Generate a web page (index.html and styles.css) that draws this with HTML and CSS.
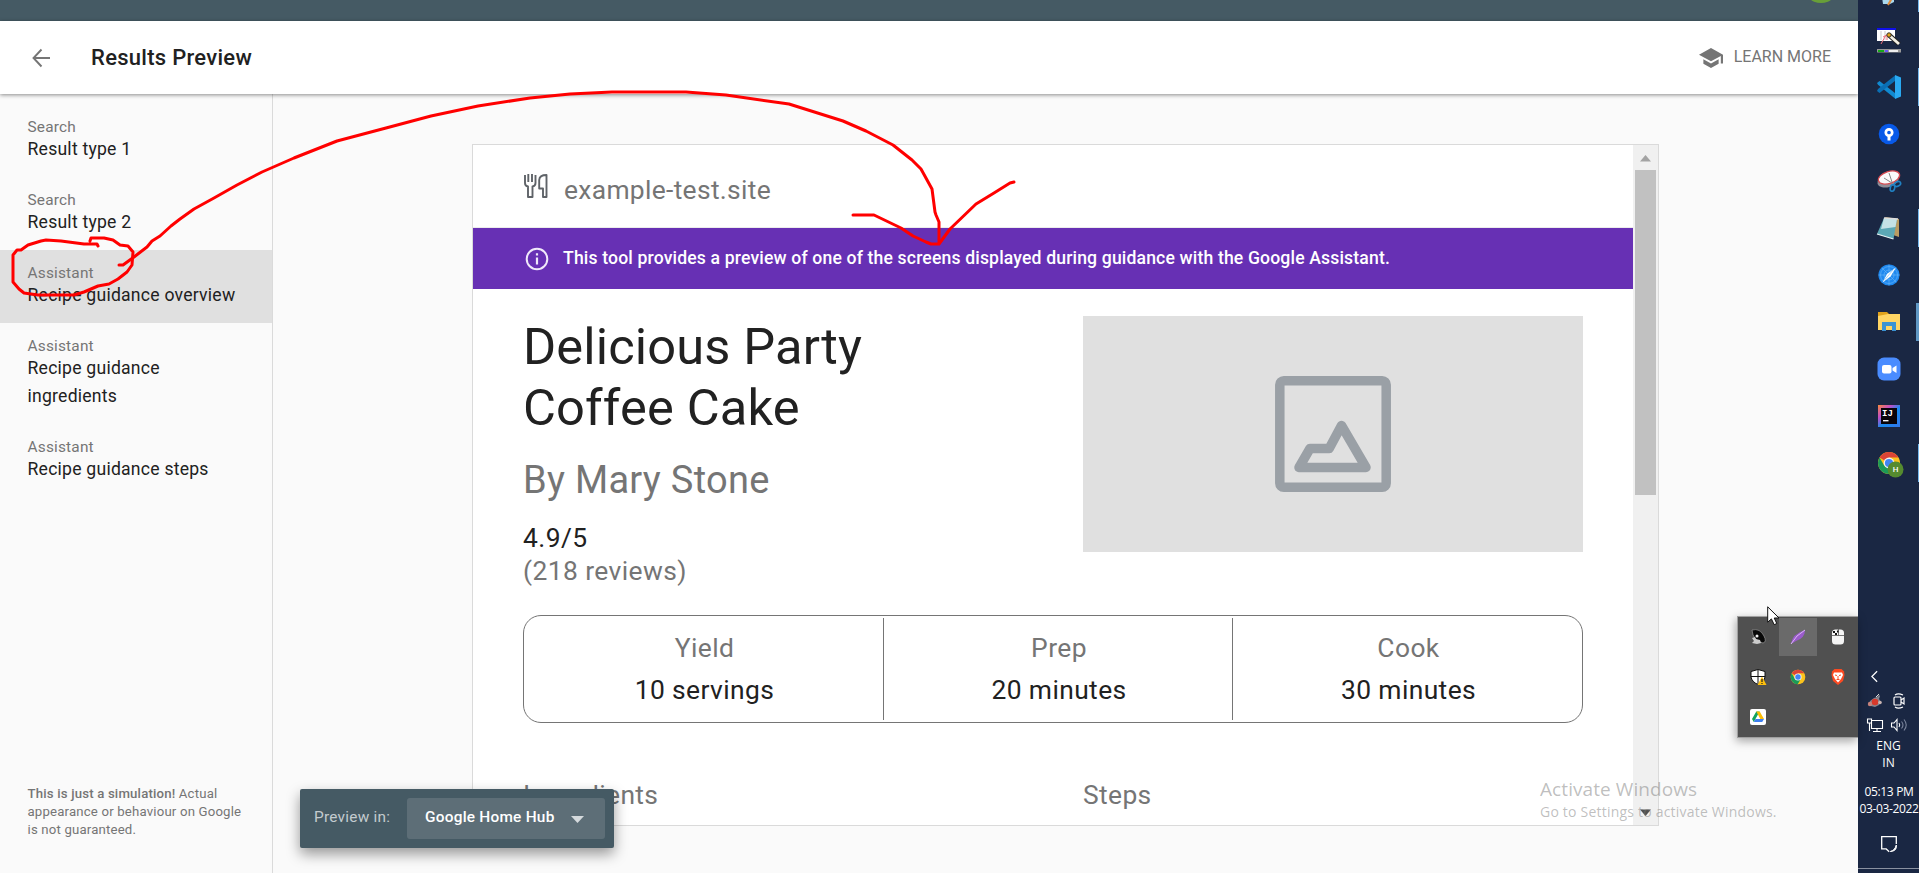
FILE: index.html
```html
<!DOCTYPE html>
<html lang="en">
<head>
<meta charset="utf-8">
<title>Results Preview</title>
<link rel="stylesheet" href="styles.css">
</head>
<body>
<div class="screen">
  <div class="browser">
    <div class="account-bar"><span class="avatar"></span></div>
    <header class="header">
      <svg class="back" viewBox="0 0 18 20"><path d="M18 10H2M9.500 1.500L1.500 10l8 8.500" fill="none" stroke="#757575" stroke-width="1.900"/></svg>
      <h1 class="title">Results Preview</h1>
      <a class="learn"><svg class="learn-icon" viewBox="1 3 22 18" preserveAspectRatio="none"><path fill="#757575" d="M5 13.180v4L12 21l7-3.820v-4L12 17l-7-3.820zM12 3L1 9l11 6 9-4.910V17h2V9L12 3z"/></svg><span>LEARN MORE</span></a>
    </header>
    <div class="content">
      <aside class="sidebar">
        <nav class="nav">
          <a class="item"><span class="kind">Search</span><span class="name">Result type 1</span></a>
          <a class="item"><span class="kind">Search</span><span class="name">Result type 2</span></a>
          <a class="item selected"><span class="kind">Assistant</span><span class="name">Recipe guidance overview</span></a>
          <a class="item"><span class="kind">Assistant</span><span class="name">Recipe guidance<br>ingredients</span></a>
          <a class="item"><span class="kind">Assistant</span><span class="name">Recipe guidance steps</span></a>
        </nav>
        <p class="note"><b>This is just a simulation!</b> Actual<br>appearance or behaviour on Google<br>is not guaranteed.</p>
      </aside>
      <main class="stage">
        <div class="card">
          <div class="page">
            <div class="site">
              <svg class="cutlery" viewBox="0 0 24 24" fill="none" stroke="#5f6368" stroke-width="1.900" stroke-linejoin="round"><path d="M1 1v8q0 3 3 3.500V23h4.500V12.500q3-.5 3-3.500V1M4.300 0v8M8 0v8M22.500 1v22H19V14.500h-3.800V6q.3-5 7.300-5z"/></svg>
              <span>example-test.site</span>
            </div>
            <div class="banner">
              <svg class="info" viewBox="0 0 24 24"><circle cx="12" cy="12" r="10.300" fill="none" stroke="#f0e9fa" stroke-width="2"/><path d="M12 10.500v7M12 6.300v2.300" stroke="#f0e9fa" stroke-width="2.200"/></svg>
              <span>This tool provides a preview of one of the screens displayed during guidance with the Google Assistant.</span>
            </div>
            <div class="recipe">
              <div class="top">
                <div class="intro">
                  <h2 class="dish">Delicious Party<br>Coffee Cake</h2>
                  <div class="author">By Mary Stone</div>
                  <div class="rating">4.9/5</div>
                  <div class="reviews">(218 reviews)</div>
                </div>
                <div class="photo">
                  <svg viewBox="0 0 116 116" fill="none" stroke="#9aa0a6" stroke-width="9.500" stroke-linejoin="round"><rect x="4.800" y="4.800" width="106.400" height="106.400" rx="4"/><path d="M24 91.500h67L66.500 49.500 54.200 72.500H35z"/></svg>
                </div>
              </div>
              <div class="facts">
                <div class="fact"><span class="label">Yield</span><span>10 servings</span></div>
                <div class="fact"><span class="label">Prep</span><span>20 minutes</span></div>
                <div class="fact"><span class="label">Cook</span><span>30 minutes</span></div>
              </div>
              <div class="sections"><span>Ingredients</span><span>Steps</span></div>
            </div>
          </div>
          <div class="scrollbar">
            <svg class="arrow" viewBox="0 0 25 25"><path d="M7 16.500h11L12.500 10z" fill="#a3a3a3"/></svg>
            <div class="thumb"></div>
            <svg class="arrow last" viewBox="0 0 25 25"><path d="M7 9.500h11L12.500 16z" fill="#505050"/></svg>
          </div>
        </div>
      </main>
    </div>
  </div>

  <div class="taskbar">
    <div class="apps">
      <svg viewBox="0 0 24 24" class="app"><path d="M5 16l12-1v6l-4 2H6z" fill="#a9d8ee"/><path d="M11 24l4-7" stroke="#e08b3c" stroke-width="2"/></svg>
      <svg viewBox="0 0 24 24" class="app"><path d="M0 1h18v12H0z" fill="#fff"/><path d="M0 0h19v2H0z" fill="#1010e8"/><path d="M4 3v9M8 3v9" stroke="#c9c9c9"/><path d="M4 16l5-9M6 9l4-2v5" stroke="#f0707a" fill="none"/><path d="M12 7l10 9" stroke="#222" stroke-width="5"/><path d="M13 8l9 8" stroke="#f4f0e4" stroke-width="2.800"/><circle cx="12" cy="7" r="2.200" fill="#e5a314" stroke="#333"/><path d="M0 21h24v3.500H0z" fill="#999"/><path d="M1 22h6v2H1z" fill="#15a81a"/><path d="M8 22h3v2H8z" fill="#6b53f5"/><path d="M12 22h9v2h-9z" fill="#eee"/></svg>
      <svg viewBox="0 0 24 24" class="app"><path d="M0 8l2.500-2L18 18v5.500L1 9.800z" fill="#1189d0"/><path d="M0 16l2.500 2L18 6V.5L1 14z" fill="#0a6fb5"/><path d="M18 0l6 2.500v19L18 24z" fill="#29a9f2"/></svg>
      <svg viewBox="0 0 24 24" class="app"><circle cx="12" cy="12" r="10.300" fill="#0859e8"/><circle cx="12" cy="10.500" r="3.200" fill="none" stroke="#fff" stroke-width="2.700"/><path d="M12 13v5.500" stroke="#fff" stroke-width="3"/></svg>
      <svg viewBox="0 0 24 24" class="app"><ellipse cx="11" cy="11.500" rx="11" ry="6.500" transform="rotate(-18 11 11.500)" fill="#8e8e98"/><ellipse cx="12" cy="8.500" rx="11" ry="6" transform="rotate(-18 12 8.500)" fill="#fafafa" stroke="#d44950" stroke-width="1.300"/><path d="M7 9l8 5M12 4l3 9" stroke="#888"/><g fill="none" stroke="#2081c3" stroke-width="1.600"><ellipse cx="15.500" cy="19" rx="2.200" ry="3.300" transform="rotate(15 15.500 19)"/><ellipse cx="20.500" cy="15" rx="3.300" ry="2.200" transform="rotate(-25 20.500 15)"/></g></svg>
      <svg viewBox="0 0 24 24" class="app"><path d="M8 1l14 2v18l-6-2z" fill="#b99b61"/><path d="M7 2l13 1-3.500 20L0 18z" fill="#5ba8b5"/><path d="M7 2l13 1-1.500 8L4 13z" fill="#c4e2e6"/><path d="M7 2l14 1" stroke="#ddd" stroke-width="1.600"/><path d="M0 18l16.500 5" stroke="#e9f5f6" stroke-width="1.200"/></svg>
      <svg viewBox="0 0 24 24" class="app"><circle cx="12" cy="12" r="10.600" fill="#1e88ef"/><g fill="none" stroke="#63b1f8" stroke-width=".7"><circle cx="12" cy="12" r="8.500"/><circle cx="12" cy="12" r="5"/><path d="M12 1.500v21M1.500 12h21M5 5l14 14"/></g><path d="M5.500 19.500l4.500-8.500L19 4.500l-5.500 9z" fill="#fff"/><path d="M7 17.500L16 7" stroke="#8cc4f5" stroke-width=".8"/></svg>
      <svg viewBox="0 0 24 24" class="app"><path d="M1 2h9l2 2v4H1z" fill="#e0a21b"/><path d="M1 6l10-2h12v16H1z" fill="#ffd564"/><path d="M5 21v-9h14v9h-4v-5H9v5z" fill="#3b93d3"/></svg>
      <svg viewBox="0 0 24 24" class="app"><rect x=".5" y=".5" width="23" height="23" rx="6.500" fill="#4a8cff"/><rect x="5" y="8" width="9.500" height="8.500" rx="2" fill="#fff"/><path d="M15.500 11l4-2.500v7.500l-4-2.500z" fill="#fff"/></svg>
      <svg viewBox="0 0 24 24" class="app"><defs><linearGradient id="ij" x1="0" y1="0" x2="1" y2="1"><stop offset="0" stop-color="#f98a3c"/><stop offset=".3" stop-color="#c44ec4"/><stop offset=".55" stop-color="#168af0"/><stop offset="1" stop-color="#3476e8"/></linearGradient></defs><path d="M1 1h22v22H1z" fill="url(#ij)"/><path d="M4 4h16v16H4z" fill="#090409"/><text x="5" y="12" class="ij">IJ</text><path d="M6 16.700h5.500" stroke="#fff" stroke-width="1.300"/></svg>
      <svg viewBox="0 0 24 24" class="app chrome"><use href="#chrome"/><circle cx="18.500" cy="18.500" r="8" fill="#558b2f"/><text x="18.500" y="21.300" class="profile">H</text></svg>
    </div>
    <div class="status">
      <svg viewBox="0 0 8 14" class="chev"><path d="M7 1L1 7l6 6" fill="none" stroke="#fff" stroke-width="1.400"/></svg>
      <div class="pair">
        <svg viewBox="0 0 16 16"><path d="M3 8l4-3 3-1 2-2 1 1-1 3 2 3-2 3-4 2-4-1-2-1z" fill="#85868f"/><circle cx="8" cy="9" r="3.300" fill="#d7392b"/><circle cx="3" cy="11" r="2.200" fill="#c7837c"/><circle cx="13" cy="9.500" r="1.800" fill="#c9b4b2"/><path d="M9 4l3-3" stroke="#ddd"/></svg>
        <svg viewBox="0 0 16 16" fill="none" stroke="#fff" stroke-width="1.200"><rect x="3" y="4" width="7" height="8" rx="1"/><path d="M10 7l3-2v6l-3-2M4 2q3-2.300 8 0M4 14q3 2.300 8 0"/></svg>
      </div>
      <div class="pair">
        <svg viewBox="0 0 16 16" fill="none" stroke="#fff" stroke-width="1.100"><path d="M5 3.500h10.500v8H4.500V6M.5 2h4v4h-4zM2.500 6v8M10 11.500V14M6 14.500h8"/></svg>
        <svg viewBox="0 0 16 16" fill="none" stroke="#fff" stroke-width="1.100"><path d="M.5 6h2.500l3-3.500v11L3 10H.5zM8 6q1.500 2 0 4"/><path d="M10.500 4.500q3 3.500 0 7M13 2.500q4.500 5.500 0 11" stroke="#7b859c"/></svg>
      </div>
      <div class="lang">ENG<br>IN</div>
      <div class="clock">05:13 PM<br>03-03-2022</div>
      <svg viewBox="0 0 16 16" class="notify"><path d="M15.300 8V.700H.7v12.200h4.500l3 2.800" fill="none" stroke="#fff" stroke-width="1.300"/><path d="M15.300 9q1 6-6 6.500 4.500-1 6-6.500z" fill="#fff" stroke="#fff"/></svg>
    </div>
    <div class="desktop-edge"></div>
    <i class="mark m1"></i><i class="mark m2"></i><i class="mark m3"></i><i class="mark m4"></i><i class="mark m5"></i>
  </div>

  <div class="device">
    <span class="device-label">Preview in:</span>
    <div class="select"><span>Google Home Hub</span><svg viewBox="0 0 13 7"><path d="M0 0h13L6.500 7z" fill="#d5dadd"/></svg></div>
  </div>

  <div class="tray">
    <div class="cell"><svg viewBox="0 0 16 16"><path d="M2 1q8-2 12 6 3 6-1 7Q3 12 2 1z" fill="#080808" stroke="#aaa" stroke-width=".6"/><path d="M2 9l3-1 1 2 4 1 1 3-4 1-5-1 2-2z" fill="#ccc"/><circle cx="7" cy="7" r="1.500" fill="#eee"/></svg></div>
    <div class="cell on"><svg viewBox="0 0 16 16"><path d="M1 15Q2 5 15 1q0 8-9 11z" fill="#9a5bcb"/><path d="M1 15Q6 6 15 1" stroke="#dab6f5" fill="none"/></svg></div>
    <div class="cell"><svg viewBox="0 0 16 16"><rect x="2" y=".5" width="12" height="15" rx="3.500" fill="#f4f4f4"/><path d="M2 6.500h12M8.500 0v6.500" stroke="#555" stroke-width=".8"/><path d="M3 2h2v2H3zM5 4h2v2H5zM7 1.500h1.500v2H7z" fill="#111"/></svg></div>
    <div class="cell"><svg viewBox="0 0 16 16"><path d="M8 .5l7 2V8q-1 5-7 7.500Q2 13 1 8V2.500z" fill="#fff" stroke="#111"/><path d="M8 1v14M1 7.500h14" stroke="#111"/><path d="M12 7.500l4.500 8.500h-9z" fill="#fdbf0c"/><path d="M12 10v3M12 14v1" stroke="#222" stroke-width="1.200"/></svg></div>
    <div class="cell"><svg viewBox="0 0 24 24"><g id="chrome"><circle cx="12" cy="12" r="11" fill="#fbc31c"/><path d="M12 12L2.500 6.500A11 11 0 0 1 21.500 6.500H12z" fill="#db4437"/><path d="M2.500 6.500A11 11 0 0 0 11.500 23L16.500 14.500 12 12 7.300 14.700z" fill="#1a9a58"/><circle cx="12" cy="12" r="5.400" fill="#f5f5f5"/><circle cx="12" cy="12" r="4.100" fill="#4285f4"/></g></svg></div>
    <div class="cell"><svg viewBox="0 0 16 16"><path d="M4.500 0h7L14 2.500 14.500 6 13 12l-5 4-5-4L1.500 6 2 2.500z" fill="#fb4a22"/><path d="M4 3.500h8L13 6l-2 4-3 3.500L5 10 3 6z" fill="#fff"/><path d="M5 6l2 .5M11 6L9 6.500M8 7v3M6.500 10.500h3" stroke="#fb4a22"/></svg></div>
    <div class="cell"><svg viewBox="0 0 16 16"><rect width="16" height="16" rx="2" fill="#fff"/><path d="M6.300 2.500h3.400L6 9l-2.200 4L2 10z" fill="#11a35d"/><path d="M6.300 2.500h3.400L14 10h-3.700z" fill="#fbbc04"/><path d="M5.500 10H14l-1.800 3H3.800z" fill="#3e7ff0"/></svg></div>
  </div>

  <div class="watermark"><div class="wm-title">Activate Windows</div><div class="wm-text">Go to Settings to activate Windows.</div></div>

  <svg class="pointer" viewBox="0 0 13 20"><path d="M.7.800v15.400l3.700-3.300 2.800 5.800 2.600-1.200L7.200 12H12z" fill="#fff" stroke="#111"/></svg>

  <svg class="ink" viewBox="0 0 1919 873" fill="none" stroke="#f00" stroke-width="3" stroke-linecap="round" stroke-linejoin="round">
    <path d="M98 246L97 244 84 244 61 241 46 240 41 241 28 245 21 250 17 250 13 255 13 282 19 289 24 293 38 295 74 295 84 292 98 286 109 284 118 279 127 272 132 265 133 252 128 246 120 245 113 240 104 238 91 238 90 241"/>
    <path d="M119 265L123 265 134 257 147 247 152 241 160 236 171 226 180 219 194 209 214 198 237 185 262 172 294 158 337 141 386 128 431 116 478 106 530 98 570 94 612 92 686 92 726 95 789 104 843 121 866 131 893 145 912 160 921 169 932 189 935 212 936 215 939 222 939 243"/>
    <path d="M853 215H874L901 228 913 236 926 242 931 244 939 244 950 229 976 204 994 193 1010 183 1014 182"/>
  </svg>
</div>
</body>
</html>
```
FILE: styles.css
```css
* { box-sizing: border-box; }
body { margin: 0; background: #fafafa; font-family: Roboto, "Liberation Sans", sans-serif; color: #212121; }
svg { display: block; overflow: visible; }
h1, h2, p { margin: 0; font-weight: 400; }

.screen { position: relative; display: flex; width: 1919px; height: 873px; overflow: hidden; }
.browser { display: flex; flex-direction: column; width: 1858px; }

.account-bar { height: 21px; background: #455a64; display: flex; justify-content: flex-end; align-items: flex-end; padding: 0 19px 18px 0; overflow: hidden; }
.avatar { width: 36px; height: 36px; flex: none; border-radius: 50%; background: #689f38; }
.header { position: relative; height: 73px; flex: none; display: flex; align-items: center; padding: 0 27px 0 32px; background: #fff; box-shadow: 0 1px 4px rgba(0, 0, 0, .45); }
.back { width: 18px; height: 20px; }
.title { margin-left: 41px; padding-top: 1px; font-size: 22px; font-weight: 500; line-height: 30px; letter-spacing: .28px; }
.learn { margin-left: auto; display: flex; align-items: center; gap: 11px; font-size: 16px; line-height: 20px; color: #757575; }
.learn span { padding-bottom: 2px; }
.learn-icon { width: 24px; height: 20px; }

.content { flex: 1; display: flex; min-height: 0; }
.sidebar { width: 273px; flex: none; display: flex; flex-direction: column; border-right: 1px solid #dadada; padding: 10px 0 34px; }
.item { display: flex; flex-direction: column; padding: 13px 27.500px 14px; }
.selected { background: #e0e0e0; }
.kind { font-size: 15.400px; line-height: 20px; letter-spacing: .2px; margin-bottom: -2px; color: #757575; }
.name { font-size: 17.600px; line-height: 28px; letter-spacing: .23px; white-space: nowrap; }
.note { margin-top: auto; padding-left: 27.500px; font-size: 13.200px; line-height: 18px; letter-spacing: .18px; color: #757575; white-space: nowrap; }
.note b { font-weight: 500; }

.stage { flex: 1; padding: 50px 199px 47px 199px; }
.card { width: 1187px; height: 682px; border: 1px solid #dadada; background: #fff; display: flex; }
.page { flex: 1; overflow: hidden; }
.site { height: 83px; display: flex; align-items: center; padding: 7px 0 0 51px; gap: 16px; border-bottom: 1px solid #ececec; font-size: 26.400px; letter-spacing: .32px; color: #757575; }
.cutlery { width: 24px; height: 24px; margin-top: -7px; }
.banner { height: 61px; display: flex; align-items: center; gap: 14px; padding-left: 52px; background: #6730b4; color: #fff; font-size: 17.600px; font-weight: 500; letter-spacing: .155px; white-space: nowrap; }
.banner span { padding-bottom: 2px; }
.info { width: 24px; height: 24px; }
.recipe { padding: 27px 50px 0 50px; }
.top { display: flex; justify-content: space-between; height: 299px; }
.dish { font-size: 50.600px; line-height: 61px; letter-spacing: .15px; }
.author { margin-top: 19px; font-size: 38px; line-height: 46px; letter-spacing: .28px; color: #757575; }
.rating, .reviews { font-size: 26.400px; line-height: 33px; letter-spacing: .42px; }
.rating { margin-top: 19px; }
.reviews { color: #757575; }
.photo { width: 500px; height: 236px; background: #e0e0e0; display: grid; place-items: center; }
.photo svg { width: 116px; height: 116px; }
.facts { height: 108px; display: grid; grid-template-columns: 360px 349px 1fr; padding: 2px 0; border: 1px solid #757575; border-radius: 18px; font-size: 26.400px; letter-spacing: .4px; }
.fact { display: flex; flex-direction: column; align-items: center; padding: 9px 0 0 2px; line-height: 42px; border-right: 1px solid #757575; }
.fact:last-child { border-right: 0; }
.label { color: #757575; }
.sections { display: grid; grid-template-columns: 560px 1fr; padding-top: 52px; font-size: 26.400px; line-height: 40px; letter-spacing: .36px; color: #757575; }
.scrollbar { width: 25px; background: #f0f0f0; display: flex; flex-direction: column; }
.arrow { width: 25px; height: 25px; }
.last { margin-top: auto; }
.thumb { width: 21px; height: 325px; margin-left: 2px; background: #c1c1c1; }

.taskbar { position: relative; width: 61px; background: #1a2743; color: #fff; display: flex; flex-direction: column; align-items: center; font-family: "Open Sans", "Noto Sans", sans-serif; }
.apps { display: flex; flex-direction: column; gap: 23px; margin-top: -19px; padding-left: 1px; }
.app { width: 24px; height: 24px; }
.ij { font: 700 9px "Liberation Mono", monospace; fill: #fff; }
.profile { font: 500 8px Roboto, sans-serif; fill: #fff; text-anchor: middle; }
.status { display: flex; flex-direction: column; align-items: center; margin-top: 195px; }
.chev { width: 7px; height: 13px; margin-right: 28px; margin-bottom: 10px; }
.pair { display: flex; gap: 8px; margin: 0 3px 8px 0; }
.pair svg { width: 16px; height: 16px; }
.lang { margin-top: -4px; font-size: 12px; line-height: 17px; text-align: center; }
.clock { margin: 12px 0 0 1px; font-size: 12px; line-height: 17px; text-align: center; letter-spacing: -.35px; white-space: nowrap; }
.notify { width: 16px; height: 16px; margin-top: 19px; }
.desktop-edge { position: absolute; left: 0; right: 0; top: 868px; height: 1px; background: #8a91a0; }
.mark { position: absolute; right: 0; width: 1px; height: 38px; background: #76b9ed; }
.m1 { top: -26px; } .m2 { top: 68px; } .m3 { top: 209px; }
.m4 { top: 303px; width: 3px; background: #6098c4; } .m5 { top: 444px; }

.device { position: absolute; left: 300px; top: 789px; width: 314px; height: 59px; padding: 9px; display: flex; align-items: center; justify-content: space-between; background: #455a64; border-radius: 2px; box-shadow: 0 6px 14px rgba(0, 0, 0, .4); font-size: 15.400px; letter-spacing: .24px; }
.device-label { padding: 0 0 3px 5px; color: #c3cbcf; }
.select { width: 198px; height: 41px; padding: 0 21px 0 18px; display: flex; align-items: center; justify-content: space-between; background: #5d6e77; border-radius: 3px; color: #fff; font-weight: 500; }
.select span { padding-bottom: 3px; }
.select svg { width: 13px; height: 7px; margin-top: 2px; }

.tray { position: absolute; left: 1737px; top: 616px; width: 121px; height: 122px; display: grid; grid-template-columns: repeat(3, 40px); grid-auto-rows: 40px; background: #505050; border: 1px solid #a0a0a0; border-right: 0; box-shadow: -1px 3px 9px rgba(0, 0, 0, .35); }
.cell { display: grid; place-items: center; }
.cell.on { background: #6a6a6a; margin: 1px; }
.cell svg { width: 16px; height: 16px; }
.watermark { position: absolute; left: 1540px; top: 776px; font-family: "Open Sans", "Noto Sans", sans-serif; color: rgba(120, 120, 120, .48); white-space: nowrap; }
.wm-title { font-size: 19px; line-height: 26px; letter-spacing: .08px; }
.wm-text { font-size: 14px; line-height: 19px; letter-spacing: .21px; }
.pointer { position: absolute; left: 1767px; top: 606px; width: 13px; height: 20px; }
.ink { position: absolute; left: 0; top: 0; width: 1919px; height: 873px; }
```
